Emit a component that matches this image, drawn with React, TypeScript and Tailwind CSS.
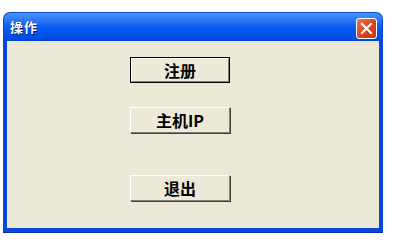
import React from 'react';

function XpButton({ label, isDefault = false }: { label: string; isDefault?: boolean }) {
  return (
    <button
      className={`w-[100px] h-[26px] flex items-center justify-center bg-[#ece9d8] text-[16px] font-bold leading-none text-black ${
        isDefault ? 'border border-black' : ''
      }`}
      style={{ fontFamily: '"Noto Sans CJK SC", "Liberation Sans", sans-serif' }}
    >
      <span
        className={`w-full h-full flex items-center justify-center border-t border-l border-t-white border-l-white border-b border-r border-b-[#808080] border-r-[#808080] ${
          isDefault ? '' : 'shadow-[1px_1px_0_#404040]'
        }`}
      >
        {label}
      </span>
    </button>
  );
}

export default function App() {
  return (
    <div className="w-[398px] h-[249px] bg-white pt-[12px] pl-[3px]">
      <div className="w-[380px] h-[221px] flex flex-col">
        <div className="h-[29px] rounded-t-[7px] bg-gradient-to-b from-[#4a92f8] via-[#0a5cf2] to-[#0048dc] border border-b-0 border-[#0a46c8] flex items-center justify-between pl-[6px] pr-[5px]">
          <span
            className="text-white font-bold text-[13px] tracking-[1px] [text-shadow:1px_1px_0_#0a1f6e]"
            style={{ fontFamily: '"Noto Sans CJK SC", "Liberation Sans", sans-serif' }}
          >
            操作
          </span>
          <div className="w-[21px] h-[21px] mt-[3px] rounded-[3px] border border-white bg-gradient-to-br from-[#e8775a] via-[#d9461f] to-[#c23a12] flex items-center justify-center">
            <svg width="13" height="13" viewBox="0 0 13 13">
              <path d="M2 2 L11 11 M11 2 L2 11" stroke="white" strokeWidth="2.2" strokeLinecap="square" />
            </svg>
          </div>
        </div>
        <div className="flex-1 bg-[#0846dc] px-[4px] pb-[4px] border-b border-[#0a2fa0]">
          <div className="h-full bg-[#ece9d8] flex flex-col pl-[123px] pt-[16px]">
            <XpButton label="注册" isDefault />
            <div className="mt-[24px]">
              <XpButton label="主机IP" />
            </div>
            <div className="mt-[42px]">
              <XpButton label="退出" />
            </div>
          </div>
        </div>
      </div>
    </div>
  );
}
